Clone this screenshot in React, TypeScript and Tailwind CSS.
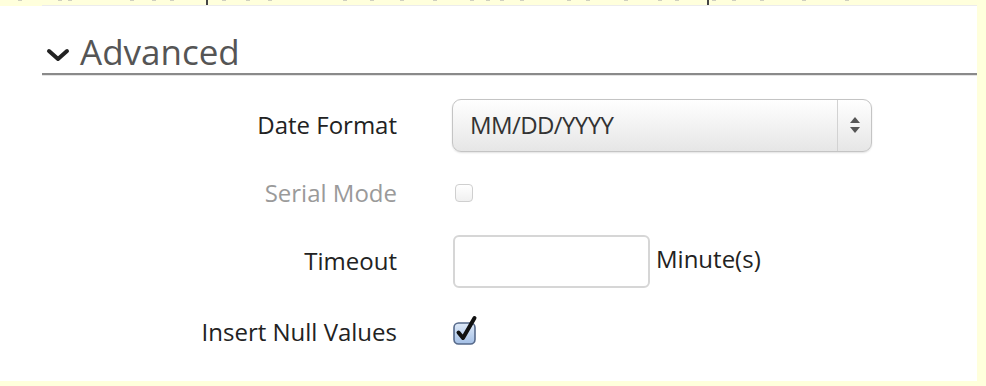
import React from 'react';

const font = { fontFamily: '"Open Sans", "Liberation Sans", sans-serif' };

const Chevron = () => (
  <svg width="24" height="14" viewBox="0 0 24 14" className="shrink-0">
    <polyline points="3,3 12,11 21,3" fill="none" stroke="#222" strokeWidth="4" strokeLinecap="round" strokeLinejoin="round" />
  </svg>
);

const SelectArrows = () => (
  <svg width="12" height="18" viewBox="0 0 12 18">
    <polygon points="6,1 11,7 1,7" fill="#555" />
    <polygon points="6,17 11,11 1,11" fill="#555" />
  </svg>
);

const CheckedBox = () => (
  <svg width="28" height="32" viewBox="0 0 28 32">
    <defs>
      <linearGradient id="cb" x1="0" y1="0" x2="0" y2="1">
        <stop offset="0" stopColor="#dfeaf8" />
        <stop offset="1" stopColor="#a3bfe6" />
      </linearGradient>
    </defs>
    <rect x="2" y="9" width="21" height="21" rx="4.5" fill="url(#cb)" stroke="#56698a" strokeWidth="1.6" />
    <polyline points="6.5,18.5 11,24 22.5,4" fill="none" stroke="#111" strokeWidth="4" strokeLinecap="round" strokeLinejoin="round" />
  </svg>
);

const marks = [18, 58, 68, 130, 152, 170, 206, 222, 246, 268, 343, 370, 400, 433, 470, 486, 500, 520, 567, 586, 624, 658, 675, 707, 712, 732, 760, 802, 845];

const Row: React.FC<{ label: string; muted?: boolean; children: React.ReactNode }> = ({ label, muted, children }) => (
  <div className="flex items-center h-[68px]">
    <div className={`w-[397px] text-right text-[24px] leading-none ${muted ? 'text-[#9a9a9a]' : 'text-[#222]'}`}>{label}</div>
    <div className="ml-[55px] flex items-center">{children}</div>
  </div>
);

export default function App() {
  return (
    <div className="w-[986px] h-[386px] bg-[#ffffdc] flex flex-col overflow-hidden" style={font}>
      {/* bottoms of the cut-off line above */}
      <div className="h-[6px] relative">
        {marks.map((x) => (
          <div
            key={x}
            className={`absolute top-0 ${x === 206 || x === 707 ? 'w-[2px] h-[5px] bg-[#444]' : 'w-[4px] h-[1px] bg-[#cfcfbf]'}`}
            style={{ left: x }}
          />
        ))}
      </div>

      <div className="flex-1 mr-[9px] bg-white flex flex-col">
        {/* Section header */}
        <div className="ml-[42px] h-[69px] flex items-end pb-[4px] border-b-2 border-[#8a8a8a] shadow-[0_1px_0_#e4e4e4,0_-1px_0_#ececec]">
          <div className="flex items-center">
            <span className="ml-[4px] mr-[10px] mt-[6px]"><Chevron /></span>
            <span className="text-[35px] leading-none text-[#555]">Advanced</span>
          </div>
        </div>

        {/* Form */}
        <div className="mt-[16px] flex flex-col">
          <Row label="Date Format">
            <div className="w-[420px] h-[53px] rounded-[9px] border border-[#c4c4c4] bg-gradient-to-b from-[#ffffff] to-[#e6e6e6] shadow-[0_1px_2px_rgba(0,0,0,0.12)] flex items-center">
              <span className="flex-1 pl-[17px] text-[24px] text-[#333] tracking-[-0.6px]">MM/DD/YYYY</span>
              <div className="h-full w-[34px] border-l border-[#d2d2d2] flex items-center justify-center">
                <SelectArrows />
              </div>
            </div>
          </Row>
          <Row label="Serial Mode" muted>
            <div className="ml-[3px] w-[18px] h-[18px] rounded-[4px] border border-[#cfcfcf] bg-gradient-to-b from-white to-[#f0f0f0]" />
          </Row>
          <Row label="Timeout">
            <div className="ml-[1px] w-[197px] h-[53px] rounded-[6px] border-2 border-[#d6d6d6] bg-white" />
            <span className="ml-[6px] mb-[4px] text-[24px] text-[#222]">Minute(s)</span>
          </Row>
          <div className="mt-[3px]">
            <Row label="Insert Null Values">
              <div className="mb-[5px]"><CheckedBox /></div>
            </Row>
          </div>
        </div>
      </div>
      <div className="h-[5px]" />
    </div>
  );
}
